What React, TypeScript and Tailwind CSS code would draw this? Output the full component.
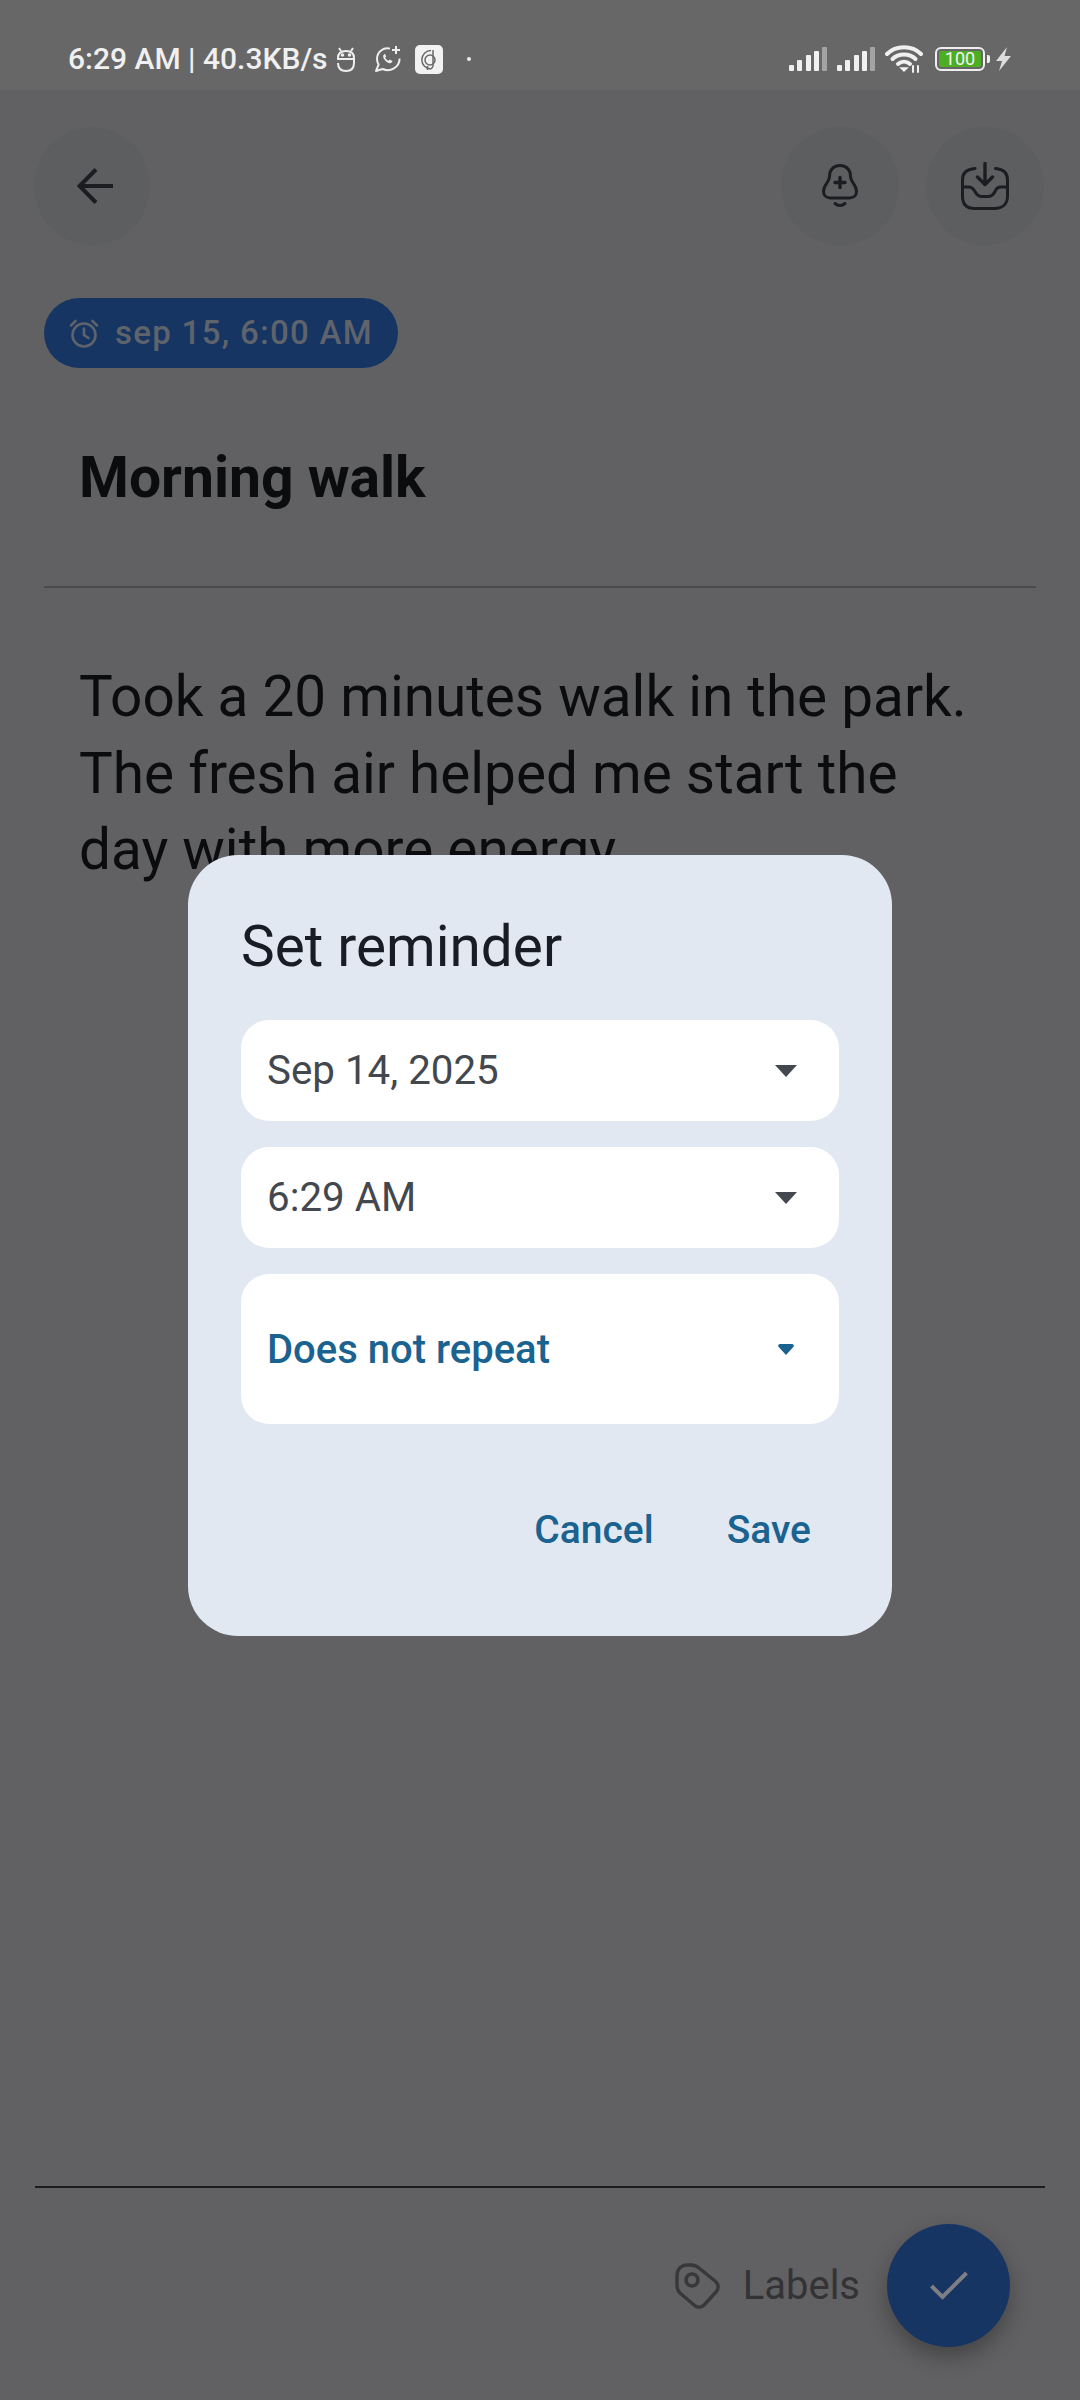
function SignalBars() {
  return (
    <svg width="38" height="24" viewBox="0 0 38 24" fill="#f0f0f0">
      <rect x="0" y="18" width="5" height="6" rx="1" />
      <rect x="8" y="13" width="5" height="11" rx="1" />
      <rect x="17" y="8" width="5" height="16" rx="1" />
      <rect x="25" y="4" width="5" height="20" rx="1" />
      <rect x="33" y="0" width="5" height="24" rx="1" fill="#a3a3a3" />
    </svg>
  );
}

function StatusLeftIcons() {
  return (
    <div className="flex items-center ml-[8px]">
      {/* little robot */}
      <svg width="20" height="25" viewBox="0 0 20 25" fill="none" stroke="#eeeeee" strokeWidth="2">
        <path d="M3 1l2 3M17 1l-2 3" />
        <path d="M2 11c0-5 3-7 8-7s8 2 8 7v5c0 5-3 8-8 8s-8-3-8-8" />
        <path d="M1 12h18" />
        <circle cx="6.5" cy="8" r="0.8" fill="#eeeeee" />
        <circle cx="13.5" cy="8" r="0.8" fill="#eeeeee" />
      </svg>
      {/* whatsapp with plus */}
      <svg className="ml-[18px]" width="28" height="28" viewBox="0 0 28 28" fill="none" stroke="#eeeeee" strokeWidth="2">
        <path d="M16 3.6C9.6 2 3 6.6 3 14c0 2.2.6 4 1.6 5.6L2 26l6.6-2c7.6 3.6 17-1.6 17-10.4" strokeLinejoin="round" />
        <path d="M10 9.4c-1.4 1.2-1 3.2.6 5.4 1.8 2.4 4 3.8 5.8 3.4 1.2-.3 2-1.2 2-2.2l-2.8-1.4-1.2 1.2c-1.4-.6-2.6-1.8-3.2-3.2l1-1.2-1.2-2.6z" fill="#eeeeee" stroke="none" />
        <path d="M22 1v8M18 5h8" />
      </svg>
      {/* app tile */}
      <svg className="ml-[13px]" width="28" height="29" viewBox="0 0 28 29">
        <rect width="28" height="29" rx="5" fill="#f2f2f2" />
        <g fill="none" stroke="#6a6a6a" strokeWidth="1.5">
          <path d="M16 5.6A9 9 0 1 0 16 24" />
          <circle cx="15" cy="15" r="5" />
          <path d="M18 5v16c0 1-1 2-2 3M12.500 21v4" />
        </g>
      </svg>
      <span className="ml-[24px] w-[4px] h-[4px] rounded-full bg-[#eeeeee]" />
    </div>
  );
}

function StatusBar() {
  return (
    <div className="h-[90px] shrink-0 bg-[#676767] flex items-center pl-[68px] pr-[69px] pt-[28px] justify-between">
      <div className="flex items-center">
        <span className="text-[30px] leading-[34px] font-medium text-[#f0f0f0] whitespace-nowrap">6:29 AM | 40.3KB/s</span>
        <StatusLeftIcons />
      </div>
      <div className="flex items-center">
        <SignalBars />
        <div className="ml-[10px]">
          <SignalBars />
        </div>
        {/* wifi */}
        <svg className="ml-[10px]" width="38" height="28" viewBox="0 0 38 28" fill="none" stroke="#f0f0f0" strokeLinecap="round" strokeWidth="4">
          <path d="M2 9c9-9 25-9 34 0" />
          <path d="M7.500 14c6-6 17-6 23 0" />
          <path d="M13 19c3.500-3 8.500-3 12 0" />
          <path d="M16 23l3 3 3-3z" fill="#f0f0f0" strokeWidth="1.500" />
          <path d="M28 21v6M33 21v6" strokeWidth="2" />
        </svg>
        {/* battery */}
        <div className="ml-[12px] flex items-center">
          <div className="w-[50px] h-[24px] rounded-[6px] border-2 border-[#eeeeee] p-[2px] flex">
            <div className="flex-1 rounded-[2px] bg-[#4caf23] flex items-center justify-center text-[18px] leading-none text-[#f4f4f4]">100</div>
          </div>
          <div className="w-[3px] h-[8px] ml-[2px] rounded-r-[2px] bg-[#eeeeee]" />
        </div>
        <svg className="ml-[6px]" width="15" height="24" viewBox="0 0 15 24" fill="#dddddd">
          <path d="M11 0L0 14h6L3 24 15 9H8.500z" />
        </svg>
      </div>
    </div>
  );
}

function RoundButton({ children, className }: { children: React.ReactNode; className?: string }) {
  return (
    <button className={`h-[118px] rounded-full bg-[#5d5e60] flex items-center justify-center ${className ?? ''}`}>
      {children}
    </button>
  );
}

function Header() {
  return (
    <div className="flex items-center pt-[37px] pl-[35px] pr-[36px]">
      <RoundButton className="w-[114px] pl-[5px]">
        <svg width="36" height="36" viewBox="0 0 36 36" fill="none" stroke="#1c1d20" strokeWidth="4">
          <path d="M36 18H3" />
          <path d="M19 1.500L2.500 18 19 34.500" />
        </svg>
      </RoundButton>
      <RoundButton className="w-[118px] ml-auto">
        <svg width="36" height="44" viewBox="0 0 36 44" fill="none" stroke="#1c1d20" strokeWidth="3" strokeLinecap="round">
          <path d="M18 1.500c-7 0-10.500 5-10.500 11 0 6-6 8-6 15 0 4 3 6.500 7 6.500h19c4 0 7-2.500 7-6.500 0-7-6-9-6-15 0-6-3.500-11-10.500-11z" />
          <path d="M13 39.500c3 2.500 7 2.500 10 0" />
          <path d="M18 13.500v10M13 18.500h10" strokeWidth="3.400" />
        </svg>
      </RoundButton>
      <RoundButton className="w-[118px] ml-[27px]">
        <svg width="48" height="48" viewBox="0 0 48 48" fill="none" stroke="#1c1d20" strokeWidth="3" strokeLinecap="round" strokeLinejoin="round">
          <path d="M14 6.500C6 7 1.500 11 1.500 18v16c0 8 4 12.500 12 12.500h20c8 0 13-4.500 13-12.500V18c0-7-4.500-11-12-11.500" />
          <path d="M1.500 25h6c4 0 5 2 6.500 4.500 1.500 3 4 5 7 5h6c3 0 5.500-2 7-5C35 27 36 25 40 25h6.500" />
          <path d="M24 1.500v20M16.500 15l7.500 7.500 7.500-7.500" strokeWidth="3.400" />
        </svg>
      </RoundButton>
    </div>
  );
}

function Note() {
  return (
    <div className="flex flex-col">
      <div className="pl-[44px] pt-[53px]">
        <div className="inline-flex items-center h-[70px] w-[354px] rounded-full bg-[#163563] pl-[25px]">
          {/* alarm, no feet */}
          <svg width="30" height="29" viewBox="0 0 30 29" fill="none" stroke="#5f636b" strokeWidth="2.600" strokeLinecap="round">
            <circle cx="15" cy="16" r="11.500" />
            <path d="M15 9.500V16l4.500 3" />
            <path d="M2 6.500L6.500 2M28 6.500L23.500 2" />
          </svg>
          <span className="ml-[16px] text-[33px] font-medium tracking-[1.3px] text-[#5f636b] whitespace-nowrap">sep 15, 6:00 AM</span>
        </div>
      </div>
      <h1 className="pl-[79px] mt-[78px] text-[57px] leading-[64px] font-bold text-[#0b0c0e]">Morning walk</h1>
      <div className="mx-[44px] mt-[76px] h-[2px] bg-[#4b4b4d]" />
      <p className="pl-[79px] pr-[100px] mt-[71px] text-[56.700px] leading-[76.500px] text-[#0b0c0e]">
        Took a 20 minutes walk in the park. The fresh air helped me start the day with more energy.
      </p>
    </div>
  );
}

function Caret({ color }: { color: string }) {
  return (
    <svg className="mt-[2px]" width="22" height="12" viewBox="0 0 22 12">
      <path d="M0 0h22L11 12z" fill={color} />
    </svg>
  );
}

function SelectRow({ label }: { label: string }) {
  return (
    <div className="h-[101px] rounded-[28px] bg-white flex items-center justify-between pl-[26px] pr-[42px]">
      <span className="text-[40.300px] leading-[50px] pt-[2px] text-[#43474e]">{label}</span>
      <Caret color="#43474e" />
    </div>
  );
}

function ReminderDialog() {
  return (
    <div className="absolute top-[90px] bottom-0 inset-x-0 flex items-center justify-center">
      <div className="w-[704px] h-[781px] rounded-[50px] bg-[#e1e8f1] flex flex-col pt-[59px] px-[53px]">
        <h2 className="text-[56.700px] leading-[66px] text-[#181c24]">Set reminder</h2>
        <div className="mt-[40px] flex flex-col gap-[26px]">
          <SelectRow label="Sep 14, 2025" />
          <SelectRow label="6:29 AM" />
          <div className="h-[150px] rounded-[28px] bg-white flex items-center justify-between pl-[26px] pr-[45px]">
            <span className="text-[40px] leading-[50px] pt-[2px] font-medium text-[#1a6290]">Does not repeat</span>
            <svg className="mt-[2px]" width="16" height="11" viewBox="0 0 16 11">
              <path d="M2 0h12c1.600 0 2.400 1.800 1.300 3L8 11 .7 3C-.4 1.800.4 0 2 0z" fill="#1a6290" />
            </svg>
          </div>
        </div>
        <div className="mt-[77px] flex justify-end gap-[73px] pr-[28px] text-[39px] leading-[58px] font-medium text-[#1a6290]">
          <button>Cancel</button>
          <button>Save</button>
        </div>
      </div>
    </div>
  );
}

function BottomBar() {
  return (
    <div className="mt-auto flex flex-col">
      <div className="mx-[35px] h-[2px] bg-[#1c1d20]" />
      <div className="flex items-center justify-end pt-[36px] pb-[53px] pr-[70px]">
        <svg width="46" height="46" viewBox="0 0 46 46" fill="none" stroke="#38383a" strokeWidth="3.400">
          <path d="M2 13C2 6 6 2 13 2h3c4 0 6 1 8 3l16 13c4 3 4 8 1 11L30 41c-3 4-8 4-11 1L5 30c-2-2-3-4-3-7z" strokeLinejoin="round" />
          <circle cx="17" cy="17" r="6" />
        </svg>
        <span className="ml-[22px] text-[40px] text-[#333335]">Labels</span>
        <button className="ml-[27px] w-[123px] h-[123px] rounded-full bg-[#163563] flex items-center justify-center shadow-[0_10px_22px_rgba(0,0,0,0.3)]">
          <svg width="38" height="30" viewBox="0 0 38 30" fill="none" stroke="#7d7f84" strokeWidth="4">
            <path d="M1.500 15l11 11L36.500 2" />
          </svg>
        </button>
      </div>
    </div>
  );
}

export default function App() {
  return (
    <div className="relative w-[1080px] h-[2400px] overflow-hidden bg-[#616163] flex flex-col font-['Roboto',sans-serif]">
      <StatusBar />
      <Header />
      <Note />
      <BottomBar />
      <ReminderDialog />
    </div>
  );
}
